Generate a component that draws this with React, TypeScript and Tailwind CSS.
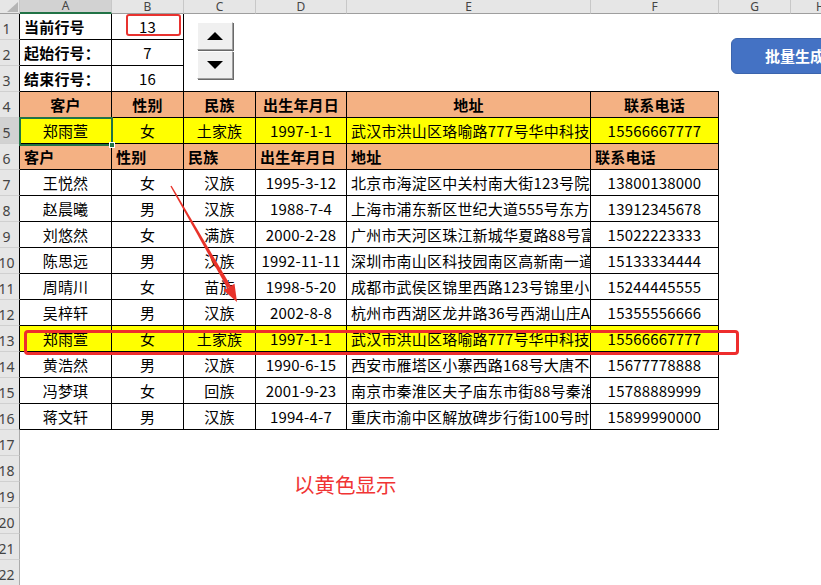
import clsx from 'clsx'

type Align = 'left' | 'center'

interface CellSpec {
  text?: string
  align?: Align
  bold?: boolean
  fill?: 'head' | 'yellow'
  box?: boolean
  underline?: boolean
}

const COLS = ['A', 'B', 'C', 'D', 'E', 'F', 'G', 'H']

const HEAD = ['客户', '性别', '民族', '出生年月日', '地址', '联系电话']

const PEOPLE = [
  ['王悦然', '女', '汉族', '1995-3-12', '北京市海淀区中关村南大街123号院4号楼', '13800138000'],
  ['赵晨曦', '男', '汉族', '1988-7-4', '上海市浦东新区世纪大道555号东方金融广场', '13912345678'],
  ['刘悠然', '女', '满族', '2000-2-28', '广州市天河区珠江新城华夏路88号富力中心', '15022223333'],
  ['陈思远', '男', '汉族', '1992-11-11', '深圳市南山区科技园南区高新南一道9号', '15133334444'],
  ['周晴川', '女', '苗族', '1998-5-20', '成都市武侯区锦里西路123号锦里小区', '15244445555'],
  ['吴梓轩', '男', '汉族', '2002-8-8', '杭州市西湖区龙井路36号西湖山庄A座', '15355556666'],
  ['郑雨萱', '女', '土家族', '1997-1-1', '武汉市洪山区珞喻路777号华中科技大学', '15566667777'],
  ['黄浩然', '男', '汉族', '1990-6-15', '西安市雁塔区小寨西路168号大唐不夜城', '15677778888'],
  ['冯梦琪', '女', '回族', '2001-9-23', '南京市秦淮区夫子庙东市街88号秦淮人家', '15788889999'],
  ['蒋文轩', '男', '汉族', '1994-4-7', '重庆市渝中区解放碑步行街100号时代广场', '15899990000'],
]

const CURRENT = 13

function dataRow(values: string[], fill?: 'yellow'): CellSpec[] {
  return [
    ...values.map((text, i) => ({ text, align: (i === 4 ? 'left' : 'center') as Align, fill, box: true })),
    {},
    {},
  ]
}

function buildRows(): CellSpec[][] {
  const rows: CellSpec[][] = []
  const labels: [string, string][] = [
    ['当前行号', String(CURRENT)],
    ['起始行号：', '7'],
    ['结束行号：', '16'],
  ]
  labels.forEach(([label, value], i) => {
    const tail: CellSpec[] = [0, 1, 2, 3].map(() => ({ underline: i === 2 }))
    rows.push([
      { text: label, align: 'left', bold: true, box: true },
      { text: value, align: 'center', box: true },
      ...tail,
      {},
      {},
    ])
  })
  rows.push([...HEAD.map((text) => ({ text, align: 'center' as Align, bold: true, fill: 'head' as const, box: true })), {}, {}])
  rows.push(dataRow(PEOPLE[CURRENT - 7], 'yellow'))
  rows.push([...HEAD.map((text) => ({ text, align: 'left' as Align, bold: true, fill: 'head' as const, box: true })), {}, {}])
  PEOPLE.forEach((p, i) => rows.push(dataRow(p, i + 7 === CURRENT ? 'yellow' : undefined)))
  for (let i = 0; i < 6; i++) rows.push(COLS.map(() => ({})))
  return rows
}

function Cell({ c }: { c: CellSpec }) {
  return (
    <div
      className={clsx(
        'flex min-w-0 items-center overflow-hidden whitespace-nowrap px-[4px] text-[15px] leading-none tracking-[0.2px] text-black',
        c.align === 'left' ? 'justify-start' : 'justify-center',
        c.bold && 'font-bold',
        c.fill === 'head' && 'bg-[#f4b183]',
        c.fill === 'yellow' && 'bg-[#ffff00]',
        c.box && 'border-r border-b border-black',
        c.underline && 'border-b border-black',
      )}
    >
      {c.text}
    </div>
  )
}

export default function App() {
  const rows = buildRows()

  return (
    <div className="relative h-[585px] w-[821px] overflow-hidden bg-white font-['Noto_Sans_CJK_SC','Noto_Sans',sans-serif]">
      <div className="grid grid-cols-[20px_92px_72px_72px_91px_244px_128px_72px_60px] grid-rows-[14px_repeat(22,26px)]">
        {/* corner */}
        <div className="relative border-r border-b border-r-[#c8c8c8] border-b-[#9e9e9e] bg-[#e6e6e6]">
          <svg className="absolute left-[7px] top-[2px]" width="11" height="10" viewBox="0 0 11 10">
            <polygon points="11,0 11,10 0,10" fill="#b5b5b5" />
          </svg>
        </div>
        {COLS.map((col, i) => (
          <div
            key={col}
            className={clsx(
              "flex items-center justify-center border-r border-r-[#c8c8c8] font-['Noto_Sans',sans-serif] text-[12px] leading-none text-[#444]",
              i === 0 ? 'border-b-2 border-b-[#217346] bg-[#d2d2d2]' : 'border-b border-b-[#9e9e9e] bg-[#e6e6e6]',
            )}
          >
            {col}
          </div>
        ))}
        {rows.map((row, r) => {
          const n = r + 1
          return [
            <div
              key={`h${n}`}
              className={clsx(
                "flex items-center border-b border-r border-b-[#d0d0d0] pt-[5px] font-['Noto_Sans',sans-serif] text-[14px] leading-none text-[#444]",
                n <= 16 ? 'border-r-black' : 'border-r-[#ababab]',
                n === 5 ? 'bg-[#d2d2d2]' : 'bg-[#e6e6e6]',
              )}
            >
              <span className="flex w-[13px] justify-center">{n}</span>
            </div>,
            ...row.map((c, ci) => <Cell key={`${n}-${ci}`} c={c} />),
          ]
        })}
      </div>

      {/* selected cell A5 */}
      <div className="pointer-events-none absolute left-[19px] top-[117px] h-[29px] w-[94px] border-2 border-[#217346]" />
      <div className="absolute left-[109px] top-[142px] h-[6px] w-[6px] border border-white bg-[#217346]" />

      {/* spin button */}
      <div className="absolute left-[197px] top-[22px] flex w-[36px] flex-col gap-[1px]">
        {['up', 'down'].map((dir) => (
          <button
            key={dir}
            type="button"
            className="flex h-[28px] items-center justify-center border border-t-white border-l-white border-r-[#a0a0a0] border-b-[#a0a0a0] bg-[#f0f0f0] shadow-[1px_1px_0_#696969]"
          >
            <svg width="16" height="8" viewBox="0 0 16 8">
              {dir === 'up' ? <polygon points="8,0 16,8 0,8" fill="#000" /> : <polygon points="0,0 16,0 8,8" fill="#000" />}
            </svg>
          </button>
        ))}
      </div>

      {/* batch button */}
      <button
        type="button"
        className="absolute left-[731px] top-[38px] flex h-[36px] w-[150px] items-center rounded-[6px] border border-[#3b64ad] bg-[#4472c4] pl-[33px] text-[15px] font-bold text-white"
      >
        批量生成工资条
      </button>

      {/* annotations */}
      <div className="pointer-events-none absolute left-[126px] top-[14px] h-[22px] w-[55px] rounded-[3px] border-2 border-[#e8322f]" />
      <div className="pointer-events-none absolute left-[24px] top-[330px] h-[25px] w-[715px] rounded-[4px] border-[3px] border-[#ee2d2d]" />

      <svg className="pointer-events-none absolute left-0 top-0" width="821" height="585">
        <polygon points="170.4,186.3 171.6,185.7 230.8,286 227.2,288" fill="#e8332a" />
        <polygon points="223.5,290.2 234.5,283.8 237,302" fill="#e8332a" />
      </svg>

      <div className="absolute left-[294px] top-[474px] text-[20.5px] leading-none text-[#f03434]">以黄色显示</div>
    </div>
  )
}
